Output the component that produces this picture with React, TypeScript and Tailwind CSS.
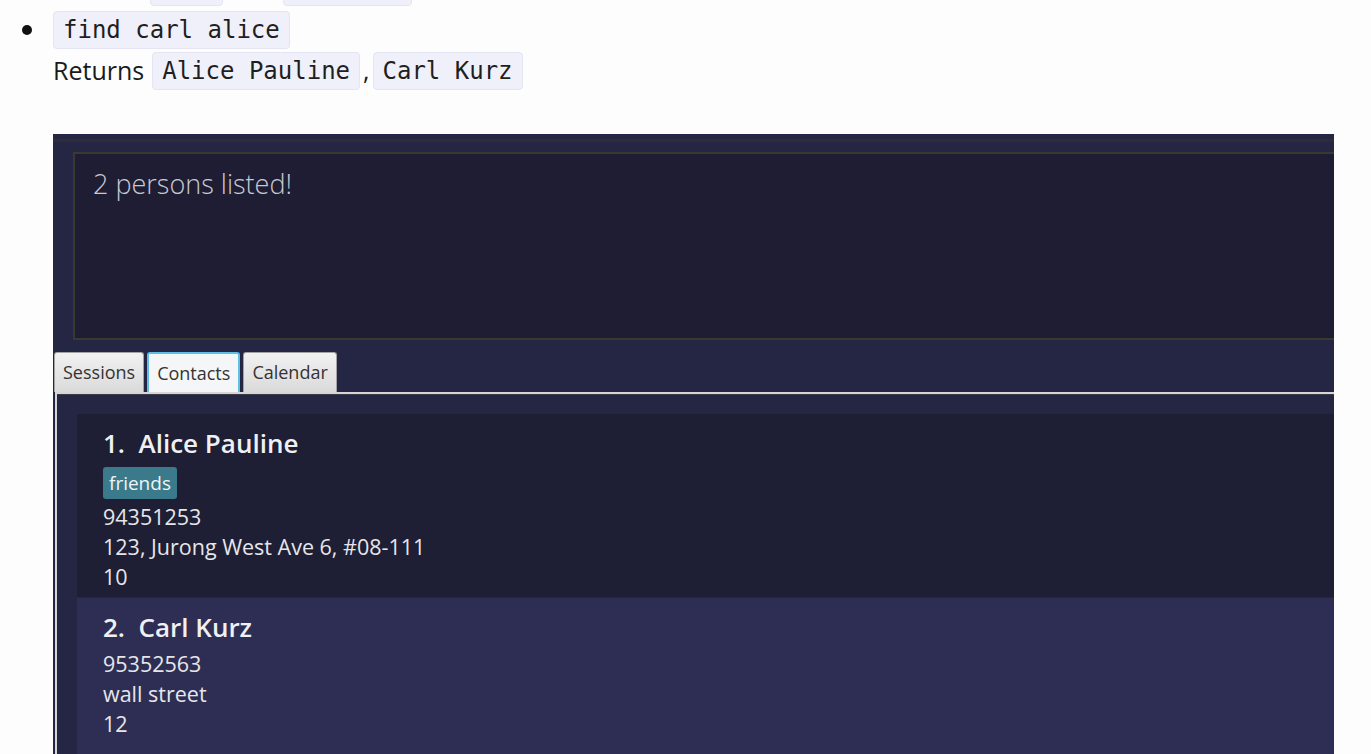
import React from 'react';

const Code: React.FC<{ children: React.ReactNode }> = ({ children }) => (
  <code className="inline-block h-[38px] px-[9px] leading-[36px] rounded-[4px] border border-[#e4e4f2] bg-[#f0f0fb] text-[24px] text-[#1f1f1f] font-['DejaVu_Sans_Mono','Liberation_Mono',monospace] align-middle">
    {children}
  </code>
);

type Person = { name: string; tags: string[]; phone: string; address: string; extra: string };

const people: Person[] = [
  { name: 'Alice Pauline', tags: ['friends'], phone: '94351253', address: '123, Jurong West Ave 6, #08-111', extra: '10' },
  { name: 'Carl Kurz', tags: [], phone: '95352563', address: 'wall street', extra: '12' },
];

const tabs = ['Sessions', 'Contacts', 'Calendar'];

export default function App() {
  return (
    <div className="h-[754px] overflow-hidden bg-[#fdfdfd] font-['Segoe_UI','Open_Sans',sans-serif]">
      {/* clipped line from above */}
      <div className="h-[6px] overflow-hidden flex items-end pl-[150px]">
        <div className="w-[73px] h-[38px] shrink-0 rounded-[4px] border border-[#e4e4f2] bg-[#f0f0fb]" />
        <div className="w-[60px] shrink-0" />
        <div className="w-[129px] h-[38px] shrink-0 rounded-[4px] border border-[#e4e4f2] bg-[#f0f0fb]" />
      </div>

      {/* bullet */}
      <div className="flex pt-[3px]">
        <div className="w-[53px] shrink-0 flex justify-center pt-[16px]">
          <span className="block w-[10px] h-[10px] rounded-full bg-[#111]" />
        </div>
        <div className="text-[25px] text-[#1a1a1a]">
          <div className="h-[41px] flex items-center">
            <Code>find carl alice</Code>
          </div>
          <div className="h-[41px] flex items-center">
            <span className="mr-[8px]">Returns</span>
            <Code>Alice Pauline</Code>
            <span className="mx-[3px]">,</span>
            <Code>Carl Kurz</Code>
          </div>
        </div>
      </div>

      {/* app screenshot */}
      <div className="ml-[53px] mt-[43px] w-[1281px] h-[700px] overflow-hidden bg-[#252644]">
        <div className="h-[5px]" />
        <div className="border-t-[3px] border-[#2d2c38]" />
        <div className="pl-[20px] pt-[10px]">
          <div className="h-[188px] border-2 border-r-0 border-[#3a3930] bg-[#1e1d33] pl-[18px] pt-[10px]">
            <p className="text-[27px] font-light text-[#c9c9d1]">2 persons listed!</p>
          </div>
        </div>

        {/* tabs */}
        <div className="flex gap-[3px] pl-[1px] pt-[12px]">
          {tabs.map(t => (
            <div
              key={t}
              className={
                t === 'Contacts'
                  ? 'h-[40px] px-[8px] flex items-center rounded-t-[3px] border-2 border-b-0 border-[#5cbfe3] bg-[#f5f6f7] text-[18px] text-[#333]'
                  : 'h-[40px] px-[8px] flex items-center rounded-t-[3px] border border-b-0 border-[#a3a3a3] bg-gradient-to-b from-[#f2f2f2] to-[#dadada] text-[18px] text-[#333]'
              }
            >
              {t}
            </div>
          ))}
        </div>

        {/* contacts panel */}
        <div className="ml-[2px] border-t-[2px] border-l-[2px] border-[#d6d6d6] h-[500px]">
          <div className="border-t border-[#3a3a44] pl-[20px] pt-[19px] h-full flex flex-col">
            {people.map((p, i) => (
              <div
                key={p.name}
                className={
                  (i % 2 === 0 ? 'bg-[#1e1e34]' : 'flex-1 bg-[#2e2e54] border-t border-[#26263f]') +
                  ' pl-[26px] pt-[13px] pb-[5px] text-[#e6e6ea]'
                }
              >
                <div className="h-[32px] leading-[32px] text-[26px] font-semibold whitespace-pre text-[#f0f0f2] mb-[6px]">
                  {`${i + 1}.  ${p.name}`}
                </div>
                {p.tags.length > 0 && (
                  <div className="flex gap-2 pt-[2px] mb-[3px]">
                    {p.tags.map(tag => (
                      <span key={tag} className="h-[32px] px-[6px] leading-[32px] rounded-[3px] bg-[#3b7a8b] text-[19px] text-[#eef4f6]">
                        {tag}
                      </span>
                    ))}
                  </div>
                )}
                <div className="text-[21.5px] leading-[30px]">
                  <div>{p.phone}</div>
                  <div>{p.address}</div>
                  <div>{p.extra}</div>
                </div>
              </div>
            ))}
          </div>
        </div>
      </div>
    </div>
  );
}
